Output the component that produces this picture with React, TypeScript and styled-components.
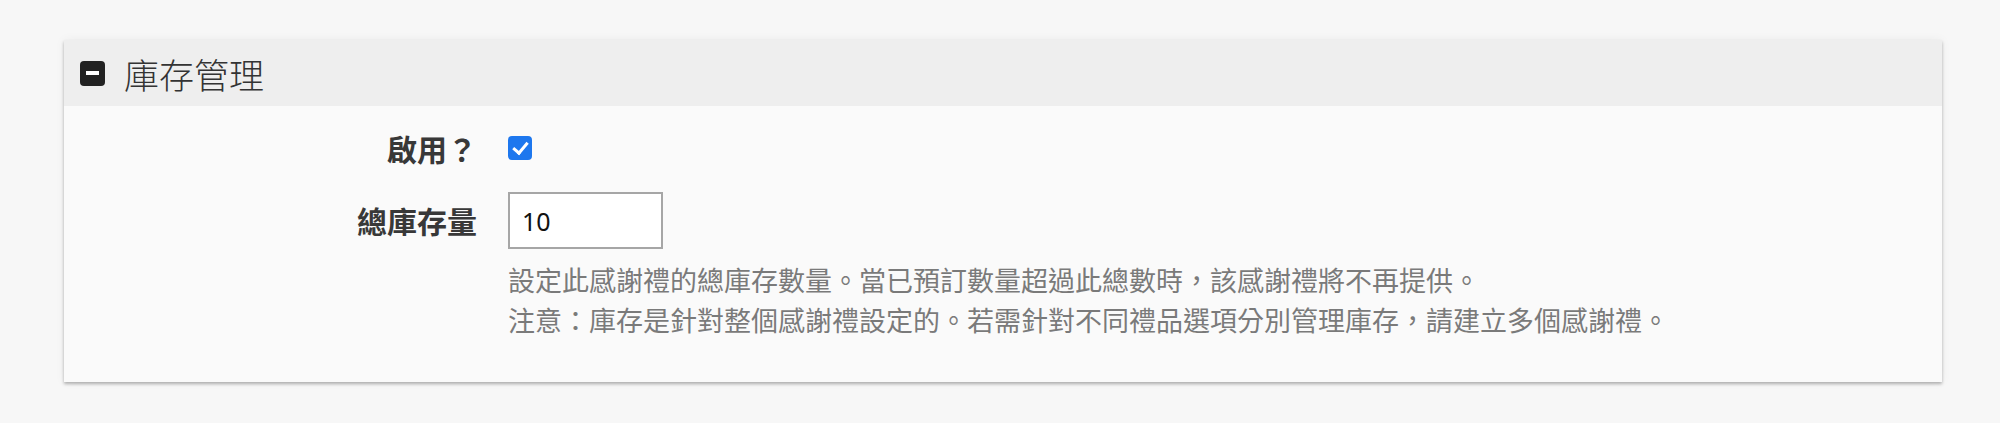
import { useState } from "react";
import styled, { createGlobalStyle } from "styled-components";

const GlobalStyle = createGlobalStyle`
	body {
		margin: 0;
		background: #f7f7f7;
		font-family: "Noto Sans", "Noto Sans CJK TC", sans-serif;
	}
`;

const Page = styled.div`
	padding: 40px 58px 40px 64px;
`;

const Card = styled.section`
	background: #fafafa;
	box-shadow: 0 2px 3px rgba(0, 0, 0, 0.28), 0 0 10px rgba(0, 0, 0, 0.05);
`;

const CardHeader = styled.div`
	height: 66px;
	background: #eeeeee;
	display: flex;
	align-items: center;
	gap: 19px;
	padding-left: 16px;
`;

const CollapseIcon = styled.span`
	width: 25px;
	height: 25px;
	border-radius: 4px;
	background: #222;
	display: flex;
	align-items: center;
	justify-content: center;

	&:after {
		content: "";
		width: 13px;
		height: 4px;
		background: #fff;
	}
`;

const Title = styled.h2`
	margin: 0;
	font-family: "Noto Sans CJK TC", sans-serif;
	font-size: 35px;
	font-weight: 300;
	color: #333;
	line-height: 1;
`;

const CardBody = styled.div`
	padding: 24px 0 42px;
	display: flex;
	flex-direction: column;
	gap: 26px;
`;

const FormRow = styled.div`
	display: grid;
	grid-template-columns: 413px 1fr;
	column-gap: 31px;
	align-items: start;
`;

const Label = styled.label<{ $height: number }>`
	justify-self: end;
	font-family: "Noto Sans CJK TC", sans-serif;
	font-size: 30px;
	font-weight: 700;
	color: #383838;
	line-height: ${(p) => p.$height}px;
`;

const Field = styled.div`
	display: flex;
	flex-direction: column;
	align-items: flex-start;
`;

const CheckWrap = styled.div`
	height: 36px;
	display: flex;
	align-items: center;
`;

const Checkbox = styled.input.attrs({ type: "checkbox" })`
	appearance: none;
	margin: 0;
	width: 24px;
	height: 24px;
	border-radius: 4px;
	border: 2px solid #767676;
	background: #fff;
	position: relative;
	cursor: pointer;

	&:checked {
		background: #1d77ee;
		border-color: #1d77ee;
	}

	&:checked:after {
		content: "";
		position: absolute;
		left: 6px;
		top: 1px;
		width: 6px;
		height: 12px;
		border: solid #fff;
		border-width: 0 3px 3px 0;
		transform: rotate(40deg);
	}
`;

const NumberInput = styled.input`
	box-sizing: border-box;
	width: 155px;
	height: 57px;
	margin: 0;
	padding: 0 12px;
	border: 2px solid #a6a6a6;
	background: #fff;
	font-family: "Noto Sans", sans-serif;
	font-size: 25px;
	color: #111;
	outline: none;
`;

const Help = styled.p`
	margin: 11px 0 0;
	font-family: "Noto Sans CJK TC", sans-serif;
	font-size: 27px;
	line-height: 40px;
	color: #7a7a7a;
`;

const App = () => {
	const [enabled, setEnabled] = useState(true);
	const [stock, setStock] = useState("10");

	return (
		<>
			<GlobalStyle />
			<Page>
				<Card>
					<CardHeader>
						<CollapseIcon />
						<Title>庫存管理</Title>
					</CardHeader>
					<CardBody>
						<FormRow>
							<Label htmlFor="stock-enabled" $height={36}>
								啟用？
							</Label>
							<CheckWrap>
								<Checkbox
									id="stock-enabled"
									checked={enabled}
									onChange={(e) => setEnabled(e.target.checked)}
								/>
							</CheckWrap>
						</FormRow>
						<FormRow>
							<Label htmlFor="stock-total" $height={57}>
								總庫存量
							</Label>
							<Field>
								<NumberInput
									id="stock-total"
									value={stock}
									onChange={(e) => setStock(e.target.value)}
								/>
								<Help>
									設定此感謝禮的總庫存數量。當已預訂數量超過此總數時，該感謝禮將不再提供。
									<br />
									注意：庫存是針對整個感謝禮設定的。若需針對不同禮品選項分別管理庫存，請建立多個感謝禮。
								</Help>
							</Field>
						</FormRow>
					</CardBody>
				</Card>
			</Page>
		</>
	);
};

export default App;
